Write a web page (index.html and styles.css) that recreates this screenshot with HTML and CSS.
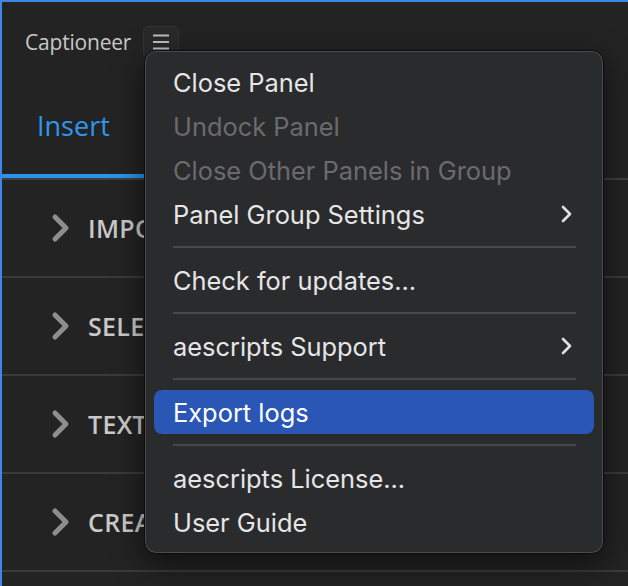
FILE: index.html
```html
<!DOCTYPE html>
<html>
<head>
<meta charset="utf-8">
<link rel="stylesheet" href="styles.css">
</head>
<body>
<div class="panel">
  <div class="header">
    <span class="title">Captioneer</span>
    <span class="menu-btn">
      <svg width="18" height="16" viewBox="0 0 18 16"><path d="M1 1.5h16M1 8h16M1 14.5h16" stroke="#bdbdbd" stroke-width="2"/></svg>
    </span>
  </div>
  <div class="tabs">
    <div class="tab active">Insert</div>
  </div>
  <div class="section"><svg class="chev" width="20" height="30" viewBox="0 0 20 30"><path d="M4 4l11 11L4 26" fill="none" stroke="#8e8e8e" stroke-width="5" stroke-linecap="round" stroke-linejoin="round"/></svg><span class="label">IMPORT</span></div>
  <div class="section"><svg class="chev" width="20" height="30" viewBox="0 0 20 30"><path d="M4 4l11 11L4 26" fill="none" stroke="#8e8e8e" stroke-width="5" stroke-linecap="round" stroke-linejoin="round"/></svg><span class="label">SELECT</span></div>
  <div class="section"><svg class="chev" width="20" height="30" viewBox="0 0 20 30"><path d="M4 4l11 11L4 26" fill="none" stroke="#8e8e8e" stroke-width="5" stroke-linecap="round" stroke-linejoin="round"/></svg><span class="label">TEXT</span></div>
  <div class="section"><svg class="chev" width="20" height="30" viewBox="0 0 20 30"><path d="M4 4l11 11L4 26" fill="none" stroke="#8e8e8e" stroke-width="5" stroke-linecap="round" stroke-linejoin="round"/></svg><span class="label">CREATE</span></div>

  <div class="menu">
    <div class="item">Close Panel</div>
    <div class="item disabled">Undock Panel</div>
    <div class="item disabled">Close Other Panels in Group</div>
    <div class="item">Panel Group Settings<svg class="sub" width="12" height="18" viewBox="0 0 12 18"><path d="M2 2l7 7-7 7" fill="none" stroke="#e0e0e0" stroke-width="2.6" stroke-linecap="round" stroke-linejoin="round"/></svg></div>
    <div class="sep"></div>
    <div class="item">Check for updates...</div>
    <div class="sep"></div>
    <div class="item">aescripts Support<svg class="sub" width="12" height="18" viewBox="0 0 12 18"><path d="M2 2l7 7-7 7" fill="none" stroke="#e0e0e0" stroke-width="2.6" stroke-linecap="round" stroke-linejoin="round"/></svg></div>
    <div class="sep"></div>
    <div class="item selected">Export logs</div>
    <div class="sep"></div>
    <div class="item">aescripts License...</div>
    <div class="item">User Guide</div>
  </div>
</div>
</body>
</html>
```

FILE: styles.css
```css
* { box-sizing: border-box; }
html, body { margin: 0; padding: 0; background: #232323; }
.panel {
  position: relative;
  width: 628px;
  height: 586px;
  overflow: hidden;
  background: #232323;
  border-top: 2px solid #3f87e6;
  border-left: 2px solid #3f87e6;
  font-family: "Open Sans", "Noto Sans", sans-serif;
}
.header {
  display: flex;
  align-items: center;
  gap: 12px;
  height: 32px;
  margin-top: 24px;
  padding-left: 23px;
}
.title {
  color: #c8c8c8;
  font-size: 21px;
  letter-spacing: -0.2px;
}
.menu-btn {
  width: 36px;
  height: 32px;
  display: flex;
  align-items: center;
  justify-content: center;
  background: #292929;
  border: 1px solid #333;
  border-radius: 5px;
}
.tabs {
  height: 122px;
  display: flex;
  border-bottom: 2px solid #3e3e3e;
}
.tab {
  width: 160px;
  padding-left: 35px;
  display: flex;
  align-items: flex-end;
  padding-bottom: 30px;
  font-size: 27px;
  line-height: 36px;
  color: #2e97f0;
  border-bottom: 4px solid #2a93f0;
}
.section {
  height: 98px;
  display: flex;
  align-items: center;
  padding-left: 49px;
  border-bottom: 2px solid #3a3a3a;
}
.chev { flex: none; margin-right: 17px; }
.label {
  color: #c9c9c9;
  font-size: 25px;
  font-weight: 600;
  letter-spacing: 0.3px;
}
.menu {
  position: absolute;
  left: 142px;
  top: 48px;
  width: 460px;
  padding: 9px;
  background: #2a2b2d;
  border: 1px solid #0c0c0c;
  border-radius: 12px;
  box-shadow: inset 0 0 0 1px #4c4c4e, 0 10px 30px rgba(0,0,0,0.55);
  font-family: Inter, "Noto Sans", sans-serif;
}
.item {
  height: 44px;
  display: flex;
  align-items: center;
  justify-content: space-between;
  padding: 0 21px 0 19px;
  border-radius: 8px;
  font-size: 25.4px;
  color: #e6e6e6;
}
.item.disabled { color: #6b6b6d; }
.item.selected { background: #2a56b6; color: #ffffff; }
.sep {
  height: 22px;
  display: flex;
  align-items: center;
  padding: 0 18px 0 19px;
}
.sep::before {
  content: "";
  display: block;
  width: 100%;
  height: 2px;
  background: #48484a;
}
```
